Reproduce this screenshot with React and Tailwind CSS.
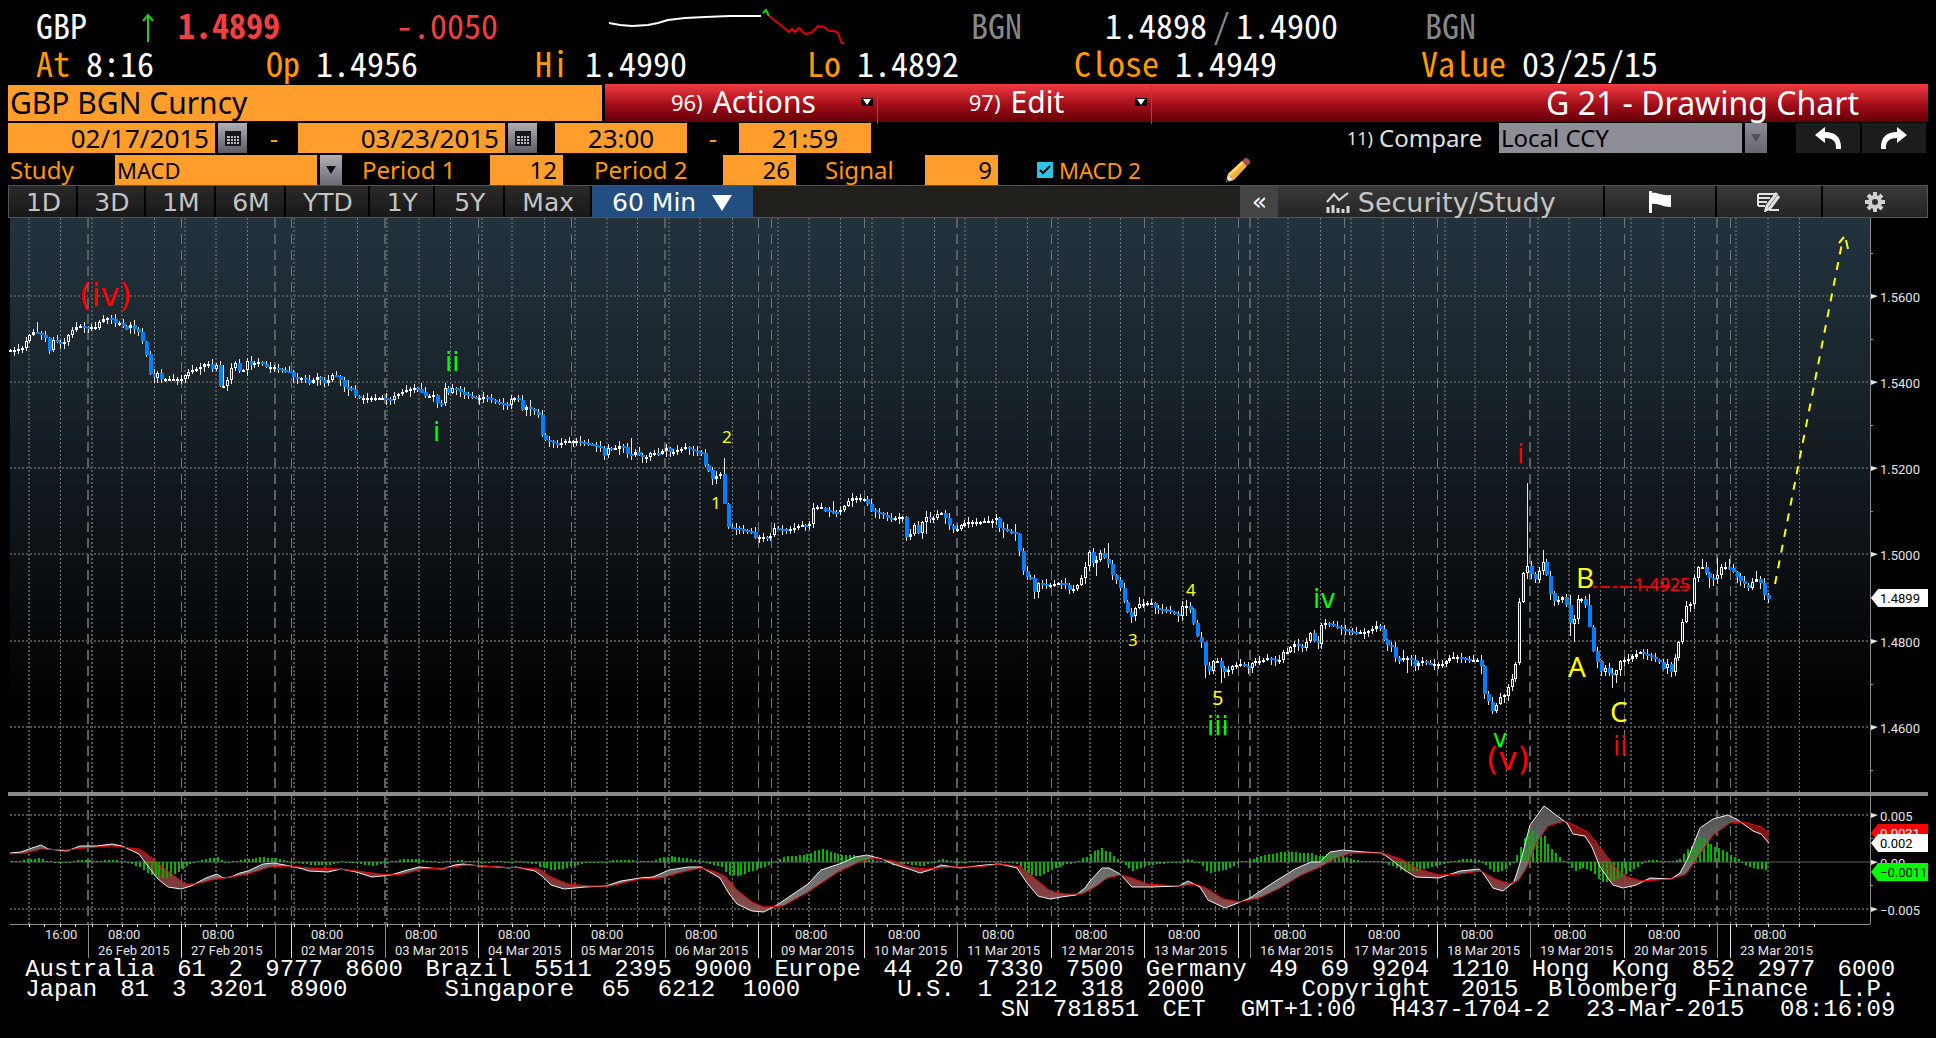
import { useState } from 'react';

const FONT_UI = "font-['Noto_Sans',sans-serif]";
const FONT_MONO = "font-['Noto_Sans_Mono_CJK_SC','DejaVu_Sans_Mono',monospace]";

const DAYS = [
  [88, 20, '26 Feb 2015'],
  [181, 21, '27 Feb 2015'],
  [291, 20, '02 Mar 2015'],
  [385, 20, '03 Mar 2015'],
  [478, 20, '04 Mar 2015'],
  [571, 20, '05 Mar 2015'],
  [665, 20, '06 Mar 2015'],
  [771, 24, '09 Mar 2015'],
  [864, 24, '10 Mar 2015'],
  [957, 25, '11 Mar 2015'],
  [1051, 24, '12 Mar 2015'],
  [1144, 24, '13 Mar 2015'],
  [1250, 24, '16 Mar 2015'],
  [1344, 24, '17 Mar 2015'],
  [1437, 24, '18 Mar 2015'],
  [1530, 24, '19 Mar 2015'],
  [1624, 24, '20 Mar 2015'],
  [1730, 24, '23 Mar 2015'],
];

// Session closes before a weekend, drawn like a day start but without a label
const WEEK_ENDS = [275, 758, 1238, 1717];

const HOUR_LINES = [
  29, 60, 92, 122, 154, 185, 216, 247, 294, 325, 357, 387, 419, 450, 482, 512, 544, 575, 607, 637,
  669, 700, 732, 778, 809, 840, 872, 903, 934, 965, 996, 1027, 1058, 1090, 1120, 1152, 1183, 1215,
  1258, 1288, 1320, 1351, 1383, 1413, 1445, 1475, 1506, 1538, 1569, 1600, 1631, 1663, 1694, 1736,
  1768, 1799,
];

const PRICE_LEVELS = [
  [296, '1.5600'],
  [382, '1.5400'],
  [468, '1.5200'],
  [554, '1.5000'],
  [641, '1.4800'],
  [727, '1.4600'],
];

const PRICE_PATH = [
  10, 350, 23, 349, 28, 340, 33, 332, 38, 332, 45, 336, 49, 340, 51, 352, 54, 340, 60, 343, 65, 344,
  72, 332, 80, 325, 87, 327, 97, 328, 103, 319, 112, 318, 117, 323, 123, 323, 127, 330, 132, 325,
  137, 330, 142, 334, 144, 342, 148, 355, 152, 376, 155, 378, 160, 372, 163, 379, 168, 379, 183, 379,
  190, 372, 200, 368, 209, 362, 213, 370, 218, 365, 221, 387, 228, 385, 232, 370, 237, 363, 243, 375,
  248, 360, 253, 365, 262, 361, 267, 367, 277, 368, 287, 371, 294, 372, 296, 380, 305, 378, 310, 384,
  318, 377, 328, 384, 333, 375, 340, 377, 346, 388, 355, 389, 358, 398, 368, 398, 387, 398, 392, 400,
  397, 395, 413, 388, 422, 389, 425, 397, 435, 395, 439, 403, 443, 403, 446, 387, 450, 393, 455, 387,
  467, 395, 478, 399, 487, 397, 500, 403, 510, 406, 513, 398, 520, 398, 522, 411, 528, 407, 535, 411,
  540, 415, 541, 427, 545, 439, 552, 441, 558, 445, 567, 441, 577, 441, 593, 445, 603, 448, 605, 457,
  609, 448, 615, 450, 622, 445, 627, 449, 630, 457, 637, 452, 643, 457, 648, 457, 653, 452, 662, 455,
  666, 446, 673, 453, 680, 450, 687, 447, 693, 450, 703, 453, 705, 463, 710, 468, 712, 479, 717, 479,
  719, 473, 722, 474, 725, 497, 729, 527, 737, 528, 747, 531, 753, 532, 755, 538, 763, 537, 772, 538,
  774, 528, 790, 530, 802, 525, 811, 526, 814, 508, 822, 507, 828, 511, 840, 513, 847, 505, 853, 498,
  867, 499, 873, 510, 885, 515, 892, 520, 898, 517, 905, 517, 908, 537, 912, 535, 915, 521, 919, 536,
  926, 516, 933, 520, 940, 513, 946, 513, 948, 523, 957, 531, 965, 523, 973, 522, 993, 521, 998, 518,
  1001, 528, 1010, 531, 1017, 534, 1020, 547, 1025, 573, 1028, 577, 1034, 578, 1036, 593, 1040, 583,
  1050, 585, 1060, 583, 1067, 584, 1071, 590, 1077, 588, 1082, 580, 1086, 570, 1090, 552, 1093, 553,
  1095, 567, 1102, 553, 1107, 560, 1112, 567, 1115, 580, 1120, 580, 1123, 595, 1126, 603, 1130, 613,
  1135, 618, 1138, 605, 1152, 602, 1157, 608, 1168, 610, 1180, 616, 1184, 605, 1191, 606, 1193, 618,
  1197, 627, 1200, 640, 1204, 643, 1208, 673, 1212, 670, 1215, 660, 1220, 661, 1223, 669, 1228, 673,
  1235, 665, 1242, 664, 1251, 668, 1254, 662, 1265, 660, 1270, 657, 1280, 662, 1284, 652, 1290, 652,
  1294, 643, 1305, 648, 1312, 633, 1315, 635, 1317, 653, 1320, 642, 1324, 622, 1333, 625, 1343, 629,
  1360, 633, 1373, 630, 1379, 625, 1384, 632, 1387, 647, 1392, 642, 1395, 653, 1399, 662, 1407, 657,
  1413, 660, 1417, 667, 1423, 660, 1430, 664, 1445, 664, 1450, 658, 1460, 657, 1472, 660, 1482, 660,
  1485, 694, 1489, 695, 1492, 711, 1497, 710, 1500, 695, 1504, 700, 1508, 690, 1513, 680, 1517, 672,
  1520, 615, 1524, 577, 1528, 564, 1532, 573, 1537, 580, 1542, 568, 1544, 562, 1547, 564, 1549, 580,
  1553, 596, 1558, 604, 1562, 597, 1567, 598, 1570, 623, 1575, 624, 1578, 599, 1586, 599, 1590, 618,
  1594, 648, 1598, 658, 1602, 673, 1606, 667, 1612, 675, 1617, 674, 1621, 661, 1630, 659, 1640, 652,
  1650, 655, 1661, 662, 1665, 669, 1669, 664, 1673, 673, 1678, 652, 1683, 631, 1687, 603, 1691, 612,
  1694, 588, 1698, 567, 1706, 567, 1709, 579, 1713, 577, 1717, 581, 1722, 567, 1730, 567, 1736, 573,
  1742, 581, 1750, 588, 1757, 578, 1762, 583, 1766, 596, 1770, 599,
];

// Bars whose range goes far beyond their body: [x, high, low]
const LONG_WICKS = [
  [38, 322, 334], [222, 365, 388], [346, 380, 396], [422, 383, 390], [528, 400, 416], [629, 438, 460],
  [645, 455, 463], [723, 458, 504], [833, 501, 514], [907, 516, 541], [926, 511, 534], [1003, 522, 538],
  [1016, 524, 541], [1036, 575, 599], [1109, 543, 568], [1098, 556, 576], [1139, 597, 609],
  [1187, 600, 616], [1206, 642, 678], [1221, 658, 683], [1401, 650, 662], [1405, 656, 673],
  [1527, 483, 579], [1542, 550, 575], [1572, 615, 642], [1569, 595, 636], [1588, 594, 626],
  [1611, 668, 688], [1618, 670, 683], [1702, 559, 569], [1711, 572, 588], [1717, 558, 584],
  [1729, 559, 570], [1756, 571, 582], [1480, 655, 674],
];

const MACD_PATH = [
  10, 853, 21, 852, 32, 848, 41, 845, 48, 849, 67, 851, 80, 846, 97, 846, 112, 844, 122, 846, 139, 854,
  147, 865, 158, 879, 168, 887, 181, 889, 191, 886, 206, 878, 217, 874, 223, 878, 231, 877, 240, 873,
  248, 871, 263, 864, 274, 863, 290, 866, 303, 869, 309, 871, 328, 872, 341, 869, 356, 872, 372, 877,
  391, 875, 404, 871, 419, 867, 442, 869, 455, 865, 463, 864, 480, 866, 499, 867, 509, 868, 516, 867,
  535, 871, 543, 877, 551, 885, 564, 889, 585, 887, 606, 886, 621, 881, 640, 878, 653, 877, 669, 870,
  688, 867, 701, 867, 720, 878, 728, 892, 737, 904, 752, 911, 764, 912, 777, 905, 808, 884, 821, 870,
  842, 863, 855, 857, 867, 855, 882, 859, 893, 864, 909, 869, 920, 873, 933, 869, 941, 865, 960, 868,
  985, 865, 1000, 864, 1017, 868, 1027, 883, 1038, 896, 1050, 899, 1061, 897, 1076, 895, 1085, 888,
  1090, 881, 1102, 868, 1109, 868, 1120, 874, 1132, 887, 1151, 887, 1179, 886, 1188, 881, 1200, 887,
  1208, 900, 1225, 908, 1238, 903, 1250, 898, 1271, 884, 1295, 869, 1311, 862, 1320, 862, 1330, 852,
  1343, 850, 1364, 852, 1382, 853, 1389, 858, 1406, 871, 1416, 877, 1439, 878, 1460, 871, 1479, 869,
  1483, 873, 1493, 888, 1503, 891, 1514, 882, 1521, 860, 1530, 825, 1544, 806, 1556, 815, 1567, 823,
  1573, 834, 1585, 836, 1592, 847, 1600, 867, 1613, 885, 1623, 888, 1636, 885, 1650, 878, 1671, 879,
  1680, 873, 1688, 858, 1700, 828, 1713, 819, 1728, 815, 1738, 820, 1753, 831, 1761, 834, 1769, 843,
];

const SIGNAL_PATH = [
  10, 854, 25, 853, 41, 849, 67, 850, 84, 848, 112, 846, 139, 849, 147, 854, 158, 863, 173, 875,
  185, 884, 196, 884, 215, 879, 231, 877, 248, 874, 269, 867, 290, 866, 311, 868, 337, 869, 358, 871,
  379, 874, 391, 875, 404, 874, 421, 869, 446, 868, 467, 865, 497, 867, 522, 868, 539, 869, 551, 877,
  568, 884, 589, 886, 610, 886, 640, 879, 661, 878, 682, 872, 701, 868, 716, 872, 726, 877, 737, 890,
  752, 902, 764, 907, 783, 906, 808, 892, 838, 872, 859, 862, 874, 858, 893, 861, 909, 867, 926, 869,
  951, 867, 977, 867, 1002, 864, 1021, 867, 1038, 881, 1050, 891, 1065, 894, 1082, 894, 1095, 887,
  1107, 878, 1120, 875, 1132, 878, 1147, 884, 1179, 886, 1196, 884, 1208, 889, 1223, 899, 1240, 902,
  1259, 898, 1280, 888, 1301, 875, 1320, 867, 1334, 859, 1351, 853, 1382, 853, 1401, 859, 1418, 869,
  1439, 875, 1460, 874, 1481, 871, 1493, 878, 1508, 884, 1518, 881, 1527, 867, 1537, 842, 1548, 826,
  1565, 821, 1588, 832, 1602, 850, 1615, 867, 1627, 877, 1642, 881, 1671, 879, 1686, 874, 1698, 857,
  1713, 835, 1730, 823, 1744, 822, 1761, 827, 1769, 833,
];

const WAVE_LABELS = [
  [79, 306, 32, '#ff0000', '(iv)'],
  [433, 441, 26, '#00ff00', 'i'],
  [445, 371, 26, '#00ff00', 'ii'],
  [1207, 735, 26, '#00ff00', 'iii'],
  [1313, 608, 26, '#00ff00', 'iv'],
  [1493, 747, 24, '#00ff00', 'v'],
  [1486, 770, 32, '#ff0000', '(v)'],
  [1517, 463, 26, '#ff0000', 'i'],
  [1613, 755, 26, '#ff0000', 'ii'],
];

const COUNT_LABELS = [
  [722, 443, 17, '2'],
  [711, 509, 17, '1'],
  [1128, 646, 17, '3'],
  [1186, 596, 17, '4'],
  [1212, 705, 20, '5'],
  [1576, 588, 28, 'B'],
  [1568, 677, 28, 'A'],
  [1610, 722, 28, 'C'],
];

const STEP = 3.88;
const ZERO_Y = 862;

function valueAt(path, x) {
  for (let i = 0; i < path.length - 2; i += 2) {
    if (x <= path[i + 2]) {
      const t = Math.max(0, (x - path[i]) / (path[i + 2] - path[i]));
      return path[i + 1] + t * (path[i + 3] - path[i + 1]);
    }
  }
  return path[path.length - 1];
}

function toPoints(path) {
  const points = [];
  for (let i = 0; i < path.length; i += 2) points.push(`${path[i]},${path[i + 1]}`);
  return points.join(' ');
}

function buildCandles() {
  const candles = [];
  let open = 350;
  let n = 0;
  for (let x = 10; x <= 1768; x += STEP) {
    const close = valueAt(PRICE_PATH, x + 2);
    const up = 1 + ((n * 7) % 5);
    const down = 1 + ((n * 11) % 6);
    let high = Math.min(open, close) - up;
    let low = Math.max(open, close) + down;
    const wick = LONG_WICKS.find((w) => Math.abs(w[0] - x) < STEP / 2);
    if (wick) {
      high = wick[1];
      low = wick[2];
    }
    candles.push({ x: Math.round(x), open, close, high, low });
    open = close;
    n += 1;
  }
  return candles;
}

function buildMacd() {
  const bars = [];
  let above = '';
  let below = '';
  for (let x = 11; x <= 1768; x += STEP) {
    const m = valueAt(MACD_PATH, x);
    const s = valueAt(SIGNAL_PATH, x);
    const m2 = valueAt(MACD_PATH, x + STEP);
    const s2 = valueAt(SIGNAL_PATH, x + STEP);
    const quad = `M${x} ${m}L${x + STEP} ${m2}L${x + STEP} ${s2}L${x} ${s}Z`;
    if (m + m2 < s + s2) above += quad;
    else below += quad;
    bars.push({ x: Math.round(x), size: s - m });
  }
  return { bars, above, below };
}

const CANDLES = buildCandles();
const MACD = buildMacd();

function Grid() {
  return (
    <g shapeRendering="crispEdges">
      {HOUR_LINES.map((x, i) => (
        <line key={x} x1={x} x2={x} y1="218" y2="924" stroke={i % 3 === 1 ? '#757b79' : '#505657'} strokeWidth={i % 3 === 1 ? 1 : 2} strokeDasharray="2 2" />
      ))}
      {[...DAYS.map((d) => d[0]), ...WEEK_ENDS].map((x, i) => (
        <line key={x} x1={x} x2={x} y1="218" y2="924" stroke={i % 3 === 0 ? '#596061' : '#707876'} strokeWidth={i % 3 === 0 ? 2 : 1} strokeDasharray="10 6" />
      ))}
      {[...PRICE_LEVELS.map((l) => l[0]), 815, 909].map((y) => (
        <line key={y} x1="10" x2="1870" y1={y} y2={y} stroke="#4a5050" strokeWidth="2" strokeDasharray="2 2" />
      ))}
    </g>
  );
}

function Candles() {
  return (
    <g shapeRendering="crispEdges">
      {CANDLES.map(({ x, open, close, high, low }) => {
        const falling = close > open + 0.4;
        const top = Math.round(Math.min(open, close));
        const size = Math.max(2, Math.round(Math.abs(close - open)));
        return (
          <g key={x}>
            <rect x={x} y={Math.round(high)} width="1" height={Math.round(low - high)} fill="#e8e8e8" />
            {falling ? (
              <rect x={x - 1} y={top} width="4" height={size} fill="#0080ff" />
            ) : (
              <>
                <rect x={x - 1} y={top} width="3" height={size} fill="#ffffff" />
                {size > 3 && <rect x={x} y={top + 1} width="1" height={size - 2} fill="#20282c" />}
              </>
            )}
          </g>
        );
      })}
    </g>
  );
}

function PriceTag({ y, height, fill, color, label }) {
  return (
    <g>
      <path d={`M1871 ${y + height / 2}L1878 ${y}H1928V${y + height}H1878Z`} fill={fill} />
      <text x="1880" y={y + height / 2 + 5} fontSize="13" fill={color}>{label}</text>
    </g>
  );
}

function Chart() {
  return (
    <svg viewBox="0 218 1936 742" className="block h-auto w-full font-['Roboto',sans-serif]" role="img" aria-label="GBP 60 minute candles with MACD study">
      <defs>
        <linearGradient id="sky" x1="0" x2="0" y1="0" y2="1">
          <stop offset="0" stopColor="#22333e" />
          <stop offset="0.3" stopColor="#19232a" />
          <stop offset="0.45" stopColor="#12191f" />
          <stop offset="0.65" stopColor="#090d10" />
          <stop offset="0.86" stopColor="#000000" />
        </linearGradient>
        <linearGradient id="above" gradientUnits="userSpaceOnUse" x1="0" x2="0" y1="806" y2="912">
          <stop offset="0" stopColor="#5a5a5a" />
          <stop offset="1" stopColor="#8a8a8a" />
        </linearGradient>
        <linearGradient id="below" gradientUnits="userSpaceOnUse" x1="0" x2="0" y1="820" y2="912">
          <stop offset="0" stopColor="#8a0c0c" />
          <stop offset="1" stopColor="#8f5a5a" />
        </linearGradient>
      </defs>
      <rect x="10" y="218" width="1860" height="574" fill="url(#sky)" />
      <Grid />
      <Candles />

      {/* Wave counts */}
      <g className="font-['DejaVu_Sans',sans-serif]">
        {WAVE_LABELS.map(([x, y, size, fill, label]) => (
          <text key={`${x}-${y}`} x={x} y={y} fontSize={size} fill={fill}>{label}</text>
        ))}
      </g>
      <path d="M1580 587H1692" stroke="#e00000" strokeWidth="2" strokeDasharray="10 3 4 3" />
      <g className="font-['Noto_Sans',sans-serif]" fill="#ffff00">
        <text x="1634" y="591" fontSize="18" fill="#ff0000">1.4925</text>
        {COUNT_LABELS.map(([x, y, size, label]) => (
          <text key={label} x={x} y={y} fontSize={size}>{label}</text>
        ))}
      </g>

      {/* Projection */}
      <g stroke="#ffff00" strokeWidth="2" fill="none">
        <path d="M1775 584L1843 238" strokeDasharray="8 8" />
        <path d="M1839 243L1844 237M1846 240L1848 249" />
      </g>

      {/* MACD */}
      <g shapeRendering="crispEdges">
        {MACD.bars.map(({ x, size }) => {
          const h = Math.max(1, Math.round(Math.abs(size)));
          return <rect key={x} x={x} y={size > 0 ? ZERO_Y - h : ZERO_Y} width="2" height={h} fill="#00b400" />;
        })}
      </g>
      <path d={MACD.above} fill="url(#above)" fillOpacity="0.9" />
      <path d={MACD.below} fill="url(#below)" fillOpacity="0.9" />
      <line x1="10" x2="1870" y1={ZERO_Y} y2={ZERO_Y} stroke="#8a8a8a" strokeOpacity="0.7" strokeWidth="1" />
      <g shapeRendering="crispEdges">
        {MACD.bars.filter((b) => Math.abs(b.size) > 5).map(({ x, size }) => {
          const h = Math.round(Math.abs(size));
          return <rect key={x} x={x} y={size > 0 ? ZERO_Y - h : ZERO_Y} width="2" height={h} fill="#00b400" fillOpacity="0.8" />;
        })}
      </g>
      <polyline points={toPoints(MACD_PATH)} fill="none" stroke="#f0f0f0" strokeWidth="1" />
      <polyline points={toPoints(SIGNAL_PATH)} fill="none" stroke="#f00000" strokeWidth="1" />

      {/* Frame and axes */}
      <rect x="8" y="792" width="1920" height="4" fill="#8a8a8a" />
      <g stroke="#8a8a8a" shapeRendering="crispEdges">
        <line x1="1870" x2="1870" y1="218" y2="924" />
        <line x1="10" x2="1870" y1="924" y2="924" />
        {[253, 339, 425, 511, 597, 684, 770, 838, 885].map((y) => (
          <line key={y} x1="1870" x2="1873" y1={y} y2={y} />
        ))}
        {HOUR_LINES.map((x) => (
          <path key={x} d={`M${x} 924V927M${x + 15} 924V927`} stroke="#e0e0e0" />
        ))}
        {[...DAYS.map((d) => d[0]), ...WEEK_ENDS].map((x, i) => (
          <line key={x} x1={x} x2={x} y1="924" y2="958" stroke={i % 3 === 0 ? '#8a8a8a' : '#e0e0e0'} />
        ))}
      </g>
      <g fontSize="13" fill="#e4e4e4">
        {[...PRICE_LEVELS, [815, '0.005'], [862, '0.00'], [909, '−0.005']].map(([y, label]) => (
          <g key={label}>
            <path d={`M1871 ${y - 2}L1878 ${y}L1871 ${y + 3}Z`} />
            <text x="1880" y={y + 6}>{label}</text>
          </g>
        ))}
        <text x="45" y="939">16:00</text>
        {DAYS.map(([x, offset, label]) => (
          <g key={label}>
            <text x={x + offset} y="939">08:00</text>
            <text x={x + 10} y="955">{label}</text>
          </g>
        ))}
      </g>
      <PriceTag y={589} height={18} fill="#ffffff" color="#000000" label="1.4899" />
      <PriceTag y={824} height={18} fill="#ff0000" color="#ffffff" label="0.0031" />
      <PriceTag y={834} height={18} fill="#ffffff" color="#000000" label="0.002" />
      <PriceTag y={863} height={18} fill="#00ff00" color="#000000" label="−0.0011" />
    </svg>
  );
}

function Quote({ label, value }) {
  return (
    <div className="flex min-w-0 gap-4">
      <span className="text-[#ff9900]">{label}</span>
      <span>{value}</span>
    </div>
  );
}

function QuoteHeader() {
  return (
    <header className={`pt-1.5 pb-0.5 text-[34px] leading-[38px] whitespace-nowrap text-white ${FONT_MONO}`}>
      <div className="grid grid-cols-[36fr_105fr_37fr_218fr_210fr_365fr_134fr_320fr_511fr]">
        <span />
        <span className="min-w-0">GBP</span>
        <svg viewBox="0 0 14 30" className="mt-1.5 h-[30px] w-[14px]" fill="none" stroke="#22cc22" strokeWidth="2" aria-label="up">
          <path d="M7 30V3M2 9L7 3L12 9" />
        </svg>
        <span className="min-w-0 font-bold text-[#f04040]">1.4899</span>
        <span className="min-w-0 text-[#f04040]">-.0050</span>
        <svg viewBox="606 6 365 38" className="h-[38px] w-full min-w-0" fill="none" strokeWidth="2" aria-label="Intraday">
          <polyline points="609,23 620,25 632,26 648,25 658,23 668,20 685,18 705,17 730,16 761,16" stroke="#ffffff" />
          <polyline points="763,13 766,10 769,16" stroke="#22cc22" />
          <polyline points="769,16 773,19 778,23 783,27 789,32 792,29 795,32 799,28 805,34 811,33 818,26 824,27 829,31 834,31 838,33 842,44 844,42" stroke="#dd0000" />
        </svg>
        <span className="min-w-0 text-[#888888]">BGN</span>
        <span className="flex min-w-0 gap-1.5">
          1.4898<span className="text-[#888888]">/</span>1.4900
        </span>
        <span className="min-w-0 text-[#888888]">BGN</span>
      </div>
      <div className="grid grid-cols-[36fr_230fr_269fr_272fr_267fr_347fr_515fr]">
        <span />
        <Quote label="At" value="8:16" />
        <Quote label="Op" value="1.4956" />
        <Quote label="Hi" value="1.4990" />
        <Quote label="Lo" value="1.4892" />
        <Quote label="Close" value="1.4949" />
        <Quote label="Value" value="03/25/15" />
      </div>
    </header>
  );
}

function MenuButton({ code, label }) {
  return (
    <button className="relative flex min-w-0 items-center justify-center gap-2.5 border-r border-[#b04048] pb-1 pl-1">
      <span className="text-[22px]">{code}</span>
      <span>{label}</span>
      <span className="absolute right-1 flex h-2 w-3 items-center justify-center bg-black">
        <svg viewBox="0 0 8 6" className="h-1.5 w-2" fill="#ffffff"><path d="M0 0H8L4 6Z" /></svg>
      </span>
    </button>
  );
}

function TitleBar() {
  return (
    <div className="mx-2 grid h-[38px] grid-cols-[597fr_1322fr] text-[30px] leading-[36px] whitespace-nowrap">
      <input aria-label="Security" defaultValue="GBP BGN Curncy" className="my-px mr-[3px] h-9 min-w-0 bg-[#ff9e2d] px-0.5 text-black outline-none" />
      <div className="grid h-[38px] grid-cols-[273fr_273fr_776fr] bg-linear-to-b from-[#f43a44] via-[#a8101a] to-[#640008] text-white">
        <MenuButton code="96)" label="Actions" />
        <MenuButton code="97)" label="Edit" />
        <h1 className="min-w-0 pr-[69px] text-right text-[32px] leading-[38px]">G 21 - Drawing Chart</h1>
      </div>
    </div>
  );
}

function Field({ label, value, align = 'text-right' }) {
  return (
    <input aria-label={label} defaultValue={value} className={`h-[30px] min-w-0 bg-[#ff9e2d] px-1.5 text-black outline-none ${align}`} />
  );
}

function CalendarButton({ label }) {
  return (
    <button aria-label={label} className="mx-[3px] flex h-[30px] min-w-0 items-center justify-center bg-linear-to-b from-[#b0b0b8] to-[#5c5c64]">
      <svg viewBox="0 0 16 15" className="h-[15px] w-4">
        <rect width="16" height="15" fill="#18181c" />
        <path d="M2 5h3v2H2zM6 5h2v2H6zM9 5h2v2H9zM12 5h2v2h-2zM2 8h3v2H2zM6 8h2v2H6zM9 8h2v2H9zM12 8h2v2h-2zM2 11h3v2H2zM6 11h2v2H6zM9 11h2v2H9zM12 11h2v2h-2z" fill="#b8b8c0" />
      </svg>
    </button>
  );
}

function DropArrow({ label, dim }) {
  return (
    <button aria-label={label} className={`ml-[3px] flex h-[30px] min-w-0 items-center justify-center bg-linear-to-b ${dim ? 'from-[#8c8c94] to-[#66666e]' : 'from-[#b0b0b8] to-[#6c6c74]'}`}>
      <svg viewBox="0 0 10 8" className="h-2 w-2.5" fill={dim ? '#50505a' : '#101010'}><path d="M0 0H10L5 8Z" /></svg>
    </button>
  );
}

function HistoryButton({ label, flip }) {
  return (
    <button aria-label={label} className="mr-0.5 flex h-[30px] min-w-0 items-center justify-center bg-[#1c1c1c]">
      <svg viewBox="0 0 26 22" className={`h-[22px] w-[26px] ${flip ? '-scale-x-100' : ''}`} fill="#ffffff">
        <path d="M0 8L10 0V5C20 5 26 10 26 20V22H21V20C21 14 17 11 10 11V16Z" />
      </svg>
    </button>
  );
}

function RangeRow() {
  return (
    <div className="mt-px grid grid-cols-[8fr_207fr_35fr_48fr_207fr_35fr_15fr_132fr_52fr_132fr_476fr_32fr_120fr_243fr_25fr_29fr_66fr_66fr_8fr] items-center text-[26px] leading-[30px] whitespace-nowrap text-[#ff9900]">
      <span />
      <Field label="From" value="02/17/2015" />
      <CalendarButton label="Pick start date" />
      <span className="text-center">-</span>
      <Field label="To" value="03/23/2015" />
      <CalendarButton label="Pick end date" />
      <span />
      <Field label="Start time" value="23:00" align="text-center" />
      <span className="text-center">-</span>
      <Field label="End time" value="21:59" align="text-center" />
      <span />
      <span className="min-w-0 text-[18px] text-[#e0e0e0]">11)</span>
      <label htmlFor="compare" className="min-w-0 text-[24px] text-[#e0e0e0]">Compare</label>
      <select id="compare" className="h-[30px] min-w-0 appearance-none bg-[#8e8e96] px-0.5 text-[24px] leading-[30px] text-black">
        <option>Local CCY</option>
      </select>
      <DropArrow label="Open compare list" dim />
      <span />
      <HistoryButton label="Undo" />
      <HistoryButton label="Redo" flip />
      <span />
    </div>
  );
}

function StudyRow() {
  const [macd2, setMacd2] = useState(true);

  return (
    <div className="mt-0.5 grid grid-cols-[10fr_105fr_202fr_25fr_20fr_128fr_73fr_31fr_129fr_73fr_29fr_100fr_73fr_39fr_188fr_30fr_681fr] items-center text-[24px] leading-[30px] whitespace-nowrap text-[#ff9900]">
      <span />
      <label htmlFor="study" className="min-w-0">Study</label>
      <select id="study" className="h-[30px] min-w-0 appearance-none bg-[#ff9e2d] px-0.5 text-[22px] leading-[30px] text-black">
        <option>MACD</option>
      </select>
      <DropArrow label="Open study list" />
      <span />
      <span className="min-w-0">Period 1</span>
      <Field label="Period 1" value="12" />
      <span />
      <span className="min-w-0">Period 2</span>
      <Field label="Period 2" value="26" />
      <span />
      <span className="min-w-0">Signal</span>
      <Field label="Signal" value="9" />
      <span />
      <label className="flex min-w-0 items-center gap-1.5">
        <span className="relative flex h-4 w-4 items-center justify-center">
          <input type="checkbox" checked={macd2} onChange={() => setMacd2(!macd2)} className="h-4 w-4 appearance-none bg-[#2ec4e8]" />
          {macd2 && (
            <svg viewBox="0 0 16 16" className="pointer-events-none absolute h-4 w-4" fill="none" stroke="#000000" strokeWidth="2"><path d="M3 8L6 11L13 4" /></svg>
          )}
        </span>
        <span className="text-[22px]">MACD 2</span>
      </label>
      <button aria-label="Draw" className="min-w-0">
        <svg viewBox="0 0 26 26" className="h-[26px] w-[26px]">
          <path d="M1 25L3 17L9 23Z" fill="#f4e4c0" />
          <path d="M1 25L2 22L4 24Z" fill="#333333" />
          <path d="M3 17L17 4L22 9L9 23Z" fill="#f4b030" />
          <path d="M3 17L17 4L19 6L5 19Z" fill="#ffd870" />
          <path d="M17 4L20 1Q25 1 25 6L22 9Z" fill="#b05050" />
        </svg>
      </button>
      <span />
    </div>
  );
}

function RangeButton({ label }) {
  return (
    <button className="min-w-0 border-r-2 border-black bg-linear-to-b from-[#2a2a2a] to-[#181818] pt-0.5 pl-0.5">{label}</button>
  );
}

function ChartToolbar() {
  return (
    <nav className="mx-2 grid h-[33px] grid-cols-[69fr_68fr_70fr_70fr_84fr_65fr_70fr_87fr_161fr_488fr_38fr_327fr_112fr_106fr_104fr] border border-[#555555] font-['DejaVu_Sans',sans-serif] text-[25px] leading-[29px] whitespace-nowrap text-[#c4c4c4]">
      <RangeButton label="1D" />
      <RangeButton label="3D" />
      <RangeButton label="1M" />
      <RangeButton label="6M" />
      <RangeButton label="YTD" />
      <RangeButton label="1Y" />
      <RangeButton label="5Y" />
      <RangeButton label="Max" />
      <button className="flex min-w-0 items-center justify-center gap-4 bg-[#224f80] pt-0.5 text-white">
        60 Min
        <svg viewBox="0 0 20 16" className="h-4 w-5" fill="#ffffff"><path d="M0 0H20L10 16Z" /></svg>
      </button>
      <span className="bg-[#21201c]" />
      <button className="min-w-0 bg-[#444444] text-white">«</button>
      <button className="flex min-w-0 items-center justify-center gap-2 border-r-2 border-black bg-linear-to-b from-[#3a3a3a] to-[#242424] pt-0.5 text-[27px]">
        <svg viewBox="0 0 24 22" className="h-[22px] w-6" fill="none" stroke="#d8d8d8" strokeWidth="2">
          <path d="M1 10L8 2L13 8L22 1" />
          <path d="M2 21V15M7 21V13M12 21V16M17 21V17M22 21V14" strokeWidth="3" />
        </svg>
        Security/Study
      </button>
      <button aria-label="Flag" className="flex min-w-0 items-center justify-center border-r-2 border-black bg-linear-to-b from-[#3a3a3a] to-[#242424]">
        <svg viewBox="0 0 22 22" className="h-[22px] w-[22px]" fill="#ffffff">
          <path d="M0 0H3V22H0ZM3 2C8 1 12 5 22 4V16C13 16 9 12 3 13Z" />
        </svg>
      </button>
      <button aria-label="Annotate" className="flex min-w-0 items-center justify-center border-r-2 border-black bg-linear-to-b from-[#3a3a3a] to-[#242424]">
        <svg viewBox="0 0 24 20" className="h-5 w-6" fill="none" stroke="#e0e0e0" strokeWidth="2">
          <path d="M1 2H18M1 6H13M1 10H10M1 14H8M1 2V14" />
          <path d="M20 1L10 14L9 18L13 16L22 4" strokeWidth="3" />
          <path d="M12 18H22" />
        </svg>
      </button>
      <button aria-label="Settings" className="flex min-w-0 items-center justify-center bg-linear-to-b from-[#3a3a3a] to-[#242424]">
        <svg viewBox="0 0 20 20" className="h-5 w-5" fill="none" stroke="#d0d0d0">
          <circle cx="10" cy="10" r="5" strokeWidth="4" />
          <path d="M10 0V4M10 16V20M0 10H4M16 10H20M3 3L6 6M14 14L17 17M17 3L14 6M6 14L3 17" strokeWidth="4" />
        </svg>
      </button>
    </nav>
  );
}

function Spread({ text }) {
  return (
    <p className="flex min-w-0 justify-between">
      {text.split(' ').map((word, i) => (
        <span key={i}>{word}</span>
      ))}
    </p>
  );
}

function Footer() {
  return (
    <footer className="pr-[2.1%] pl-[1.3%] font-['Liberation_Mono',monospace] text-[24px] leading-5 whitespace-nowrap text-white">
      <Spread text="Australia 61 2 9777 8600 Brazil 5511 2395 9000 Europe 44 20 7330 7500 Germany 49 69 9204 1210 Hong Kong 852 2977 6000" />
      <div className="grid grid-cols-[318fr_351fr_303fr_586fr] gap-x-[97px]">
        <Spread text="Japan 81 3 3201 8900" />
        <Spread text="Singapore 65 6212 1000" />
        <Spread text="U.S. 1 212 318 2000" />
        <Spread text="Copyright 2015 Bloomberg Finance L.P." />
      </div>
      <div className="grid grid-cols-[976fr_205fr_35fr_655fr]">
        <span />
        <Spread text="SN 781851 CET" />
        <span />
        <Spread text="GMT+1:00 H437-1704-2 23-Mar-2015 08:16:09" />
      </div>
    </footer>
  );
}

export default function App() {
  return (
    <main className={`min-h-screen overflow-hidden bg-black ${FONT_UI}`}>
      <QuoteHeader />
      <TitleBar />
      <RangeRow />
      <StudyRow />
      <ChartToolbar />
      <Chart />
      <Footer />
    </main>
  );
}
